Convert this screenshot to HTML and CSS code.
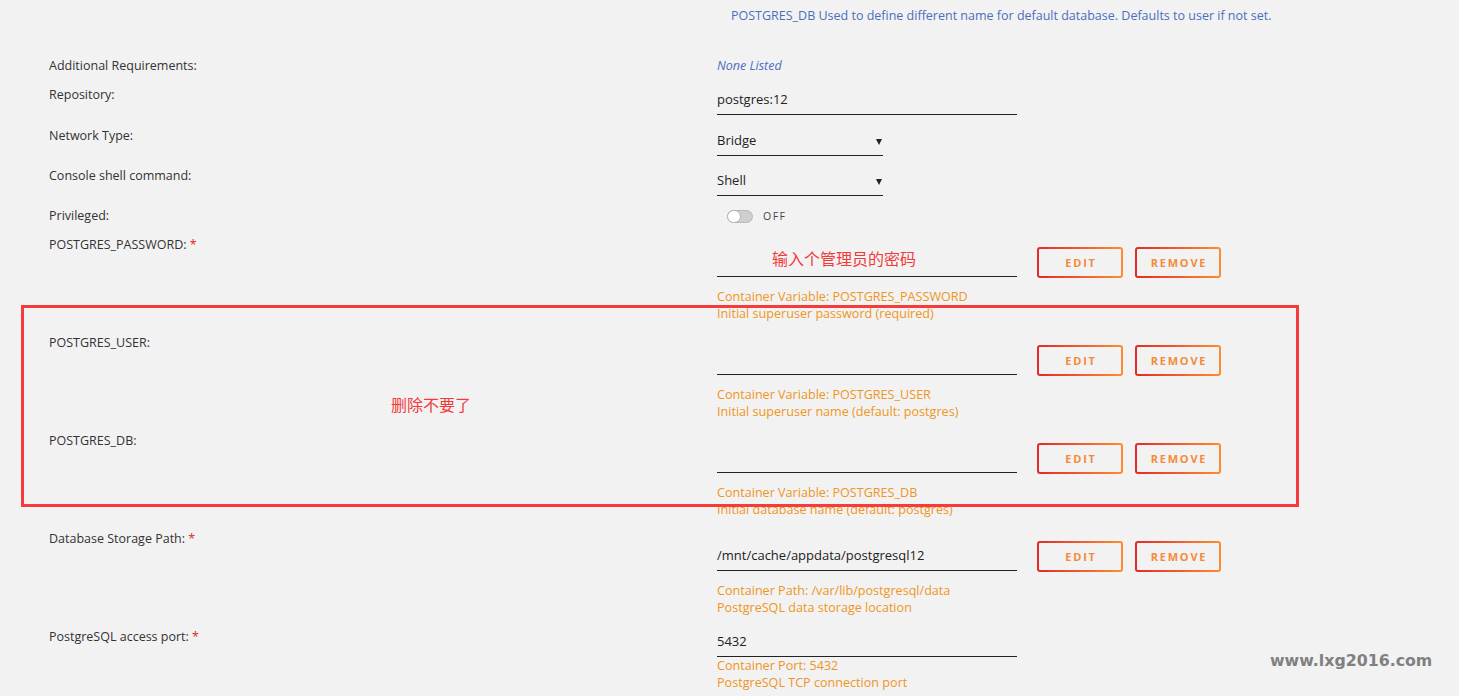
FILE: index.html
```html
<!DOCTYPE html>
<html lang="en">
<head>
<meta charset="utf-8">
<title>Docker template</title>
<link rel="stylesheet" href="styles.css">
</head>
<body>
<div class="form">
  <div class="row row-note">
    <div class="label"></div>
    <div class="note">POSTGRES_DB Used to define different name for default database. Defaults to user if not set.</div>
  </div>
  <div class="row row-req">
    <div class="label">Additional Requirements:</div>
    <div class="none">None Listed</div>
  </div>
  <div class="row row-field">
    <div class="label">Repository:</div>
    <div class="value"><div class="input wide">postgres:12</div></div>
  </div>
  <div class="row row-sel">
    <div class="label">Network Type:</div>
    <div class="value"><div class="input select">Bridge<span class="arrow"></span></div></div>
  </div>
  <div class="row row-sel">
    <div class="label">Console shell command:</div>
    <div class="value"><div class="input select">Shell<span class="arrow"></span></div></div>
  </div>
  <div class="row row-priv">
    <div class="label">Privileged:</div>
    <div class="value toggle-wrap"><span class="toggle"><span class="knob"></span></span><span class="off">OFF</span></div>
  </div>

  <div class="row row-var">
    <div class="label">POSTGRES_PASSWORD: <span class="req">*</span></div>
    <div class="value">
      <div class="line"><div class="input wide"></div><button class="btn">EDIT</button><button class="btn">REMOVE</button></div>
      <div class="desc">Container Variable: POSTGRES_PASSWORD<br>Initial superuser password (required)</div>
    </div>
  </div>
  <div class="row row-var">
    <div class="label">POSTGRES_USER:</div>
    <div class="value">
      <div class="line"><div class="input wide"></div><button class="btn">EDIT</button><button class="btn">REMOVE</button></div>
      <div class="desc">Container Variable: POSTGRES_USER<br>Initial superuser name (default: postgres)</div>
    </div>
  </div>
  <div class="row row-var">
    <div class="label">POSTGRES_DB:</div>
    <div class="value">
      <div class="line"><div class="input wide"></div><button class="btn">EDIT</button><button class="btn">REMOVE</button></div>
      <div class="desc">Container Variable: POSTGRES_DB<br>Initial database name (default: postgres)</div>
    </div>
  </div>
  <div class="row row-var">
    <div class="label">Database Storage Path: <span class="req">*</span></div>
    <div class="value">
      <div class="line"><div class="input wide">/mnt/cache/appdata/postgresql12</div><button class="btn">EDIT</button><button class="btn">REMOVE</button></div>
      <div class="desc">Container Path: /var/lib/postgresql/data<br>PostgreSQL data storage location</div>
    </div>
  </div>
  <div class="row row-port">
    <div class="label">PostgreSQL access port: <span class="req">*</span></div>
    <div class="value">
      <div class="input wide">5432</div>
      <div class="desc tight">Container Port: 5432<br>PostgreSQL TCP connection port</div>
    </div>
  </div>
</div>

<div class="anno anno-pass">输入个管理员的密码</div>
<div class="anno-box"></div>
<div class="anno anno-del">删除不要了</div>
<div class="watermark">www.lxg2016.com</div>
</body>
</html>
```

FILE: styles.css
```css
html, body {
  margin: 0;
  padding: 0;
}
body {
  background: #f2f2f2;
  font-family: "Open Sans", "Noto Sans", sans-serif;
  font-size: 12.5px;
  color: #333;
  position: relative;
  width: 1459px;
  height: 696px;
  overflow: hidden;
}
.form {
  padding-left: 49px;
  padding-top: 1px;
}
.row {
  display: grid;
  grid-template-columns: 668px 1fr;
  align-items: start;
}
.label {
  line-height: 18px;
  color: #333;
}
.req {
  color: #e22828;
}
.row-note { height: 56px; }
.note {
  padding: 6px 0 0 14px;
  line-height: 18px;
  color: #4a6fbd;
}
.row-req { height: 29px; }
.none {
  line-height: 18px;
  color: #4a6fbd;
  font-style: italic;
}
.row-field { height: 41px; }
.row-sel { height: 40px; }
.row-priv { height: 29px; }
.row-var { height: 98px; }
.row-var .value { padding-top: 12px; }
.row-port { height: 69px; }

.input {
  height: 28px;
  line-height: 27px;
  border-bottom: 1px solid #222;
  font-size: 13px;
  color: #222;
  box-sizing: content-box;
  position: relative;
}
.input.wide { width: 300px; }
.input.select { width: 166px; }
.arrow {
  position: absolute;
  right: 1px;
  top: 12px;
  width: 0;
  height: 0;
  border-left: 3px solid transparent;
  border-right: 3px solid transparent;
  border-top: 6px solid #222;
}
.line {
  display: flex;
  align-items: flex-start;
}
.btn {
  margin: -1px 0 0 20px;
  width: 86px;
  height: 31px;
  border: 2px solid transparent;
  border-radius: 3px;
  background:
    linear-gradient(#f2f2f2, #f2f2f2) padding-box,
    linear-gradient(90deg, #e22a2a, #ff8c2f) border-box;
  font-family: "Open Sans", "Noto Sans", sans-serif;
  font-weight: 700;
  font-size: 11px;
  letter-spacing: 1.8px;
  color: #f58a3a;
  padding: 0 0 0 2px;
  cursor: pointer;
}
.btn + .btn { margin-left: 12px; }
.desc {
  margin-top: 10px;
  line-height: 17px;
  font-size: 12.6px;
  color: #ee9623;
}
.desc.tight { margin-top: 0; }

.toggle-wrap {
  display: flex;
  align-items: center;
  padding: 2px 0 0 10px;
}
.toggle {
  width: 26px;
  height: 13px;
  border-radius: 7px;
  background: #cfcfcf;
  position: relative;
  box-sizing: border-box;
  border: 1px solid #b8b8b8;
}
.knob {
  position: absolute;
  left: -1px;
  top: -1px;
  width: 14px;
  height: 13px;
  border-radius: 7px;
  background: #fff;
  border: 1px solid #b0b0b0;
  box-sizing: border-box;
}
.off {
  margin-left: 10px;
  font-size: 10.5px;
  letter-spacing: 1.5px;
  color: #444;
}

.anno {
  position: absolute;
  font-family: "Noto Sans CJK SC", sans-serif;
  font-size: 16px;
  line-height: 20px;
  color: #f23a3a;
}
.anno-pass { left: 772px; top: 248px; }
.anno-del { left: 391px; top: 394px; }
.anno-box {
  position: absolute;
  left: 21px;
  top: 305px;
  width: 1272px;
  height: 196px;
  border: 3px solid #f53b3b;
}
.watermark {
  position: absolute;
  left: 1270px;
  top: 651px;
  font-family: "DejaVu Sans", sans-serif;
  font-weight: 700;
  font-size: 15.8px;
  line-height: 20px;
  color: #808080;
}
```
